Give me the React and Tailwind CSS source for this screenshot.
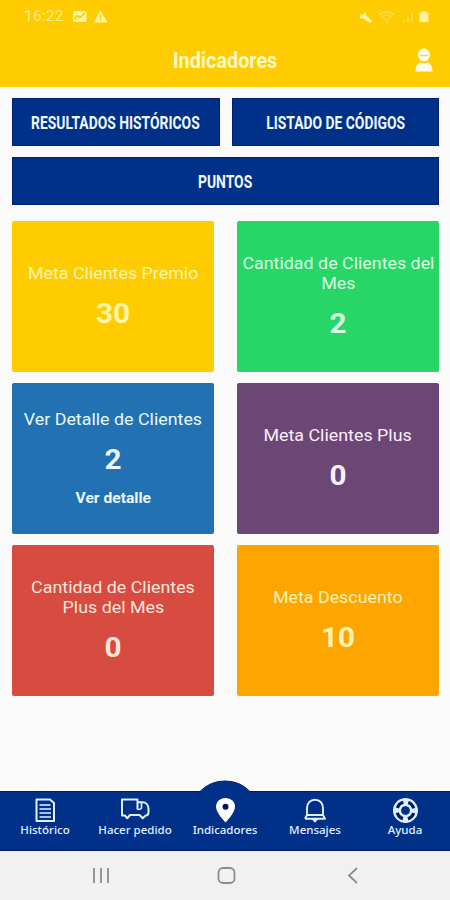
const cards = [
  { title: ["Meta Clientes Premio"], value: 30, box: "bg-[#ffcc02]", text: "text-[#fff6ac]" },
  { title: ["Cantidad de Clientes del", "Mes"], value: 2, box: "bg-[#28d567]", text: "text-[#d9ffe3]" },
  { title: ["Ver Detalle de Clientes"], value: 2, box: "bg-[#2271b3]", text: "text-[#e9f8ff]", link: "Ver detalle" },
  { title: ["Meta Clientes Plus"], value: 0, box: "bg-[#6c4675]", text: "text-[#fbf0fc]" },
  { title: ["Cantidad de Clientes", "Plus del Mes"], value: 0, box: "bg-[#d74b40]", text: "text-[#ffe5db]" },
  { title: ["Meta Descuento"], value: 10, box: "bg-[#ffa500]", text: "text-[#fff2b5]" },
];

const tabs = [
  { label: "Histórico", Icon: DocIcon },
  { label: "Hacer pedido", Icon: TruckIcon },
  { label: "Indicadores", Icon: PinIcon },
  { label: "Mensajes", Icon: BellIcon },
  { label: "Ayuda", Icon: HelpIcon },
];

function DocIcon() {
  return (
    <svg width="22" height="26" viewBox="0 0 22 26" fill="none" stroke="currentColor" strokeWidth="2">
      <path d="M2.500 2.500h13.500l4 3.500V24H2.500z" strokeLinejoin="round" />
      <path d="M5.500 8h11M5.500 12h11.500M5.500 16h11.500M5.500 20h11.500" strokeWidth="1.600" />
    </svg>
  );
}

function TruckIcon() {
  return (
    <svg width="32" height="26" viewBox="0 0 32 26" fill="none" stroke="currentColor" strokeWidth="2" strokeLinejoin="round">
      <path d="M18.500 12.500V2.500H3V18.500h3l2.300 2.800 2.700-3.300h9.500l3.200 3.300 3-2.800c1.800 0 2.800-1.500 2.800-3.500v-3c0-4-2.500-6.800-6-6.800h-5" />
      <path d="M22.500 6v4.500c0 1.500-1.500 2-4 2" strokeWidth="1.600" />
    </svg>
  );
}

function PinIcon() {
  return (
    <svg width="22" height="26" viewBox="0 0 22 26">
      <path fill="#fff" d="M11.500 1C6 1 2 4.800 2 9.800 2 16 11.500 25.500 11.500 25.500S21 16 21 9.800C21 4.800 17 1 11.500 1z" />
      <circle cx="11.500" cy="9.800" r="3" fill="#00174f" />
    </svg>
  );
}

function BellIcon() {
  return (
    <svg width="24" height="26" viewBox="0 0 24 26" fill="none" stroke="currentColor" strokeWidth="1.900" strokeLinejoin="round">
      <path d="M4 18.500V11c0-5 3.300-8.300 8-8.300S20 6 20 11v7.500M4 18h16M2 21.800h20l-2-3.800M2 21.800l2-3.800" />
      <path fill="currentColor" stroke="none" d="M8.500 22h7L12 25.800z" />
    </svg>
  );
}

function HelpIcon() {
  return (
    <svg width="26" height="26" viewBox="0 0 26 26" fill="none" stroke="currentColor">
      <circle cx="13.500" cy="13.500" r="8.300" strokeWidth="8.500" />
      <circle cx="13.500" cy="13.500" r="8.500" stroke="#001c65" strokeWidth="3.200" strokeDasharray="8.350 5" strokeDashoffset="-2.500" />
      <circle cx="13.500" cy="13.500" r="4.300" fill="#003087" stroke="none" />
    </svg>
  );
}

function StatusBar() {
  return (
    <div className="flex h-[33px] items-center justify-between pl-6 pr-[21px] text-[#ffeb83]">
      <div className="flex items-center">
        <span className="w-10 text-[15.5px] leading-none tracking-[0.2px]">16:22</span>
        <svg className="ml-2" width="16" height="13" viewBox="0 0 16 13">
          <rect x="1" y="1" width="13.500" height="11" rx="1.500" fill="#fff2a0" />
          <path d="M2.500 9l3-3.500 2.500 2 4-3.500v-1.500" fill="none" stroke="#f5c900" strokeWidth="1.500" />
        </svg>
        <svg className="ml-[5px]" width="15" height="13" viewBox="0 0 15 13">
          <path d="M7.500.500L14.500 12.500H.500z" fill="#fff2a0" />
          <path d="M7.500 4.500v4M7.500 9.500v1.500" stroke="#f5c900" strokeWidth="1.400" />
        </svg>
      </div>
      <div className="flex items-center">
        <svg width="14" height="14" viewBox="0 0 14 14">
          <path d="M1 4.500h3L7 1.500v3.500L13 11l-2 2-2.500-1.500L4.500 8.500H1z" fill="#fff2a0" />
        </svg>
        <svg className="ml-[5px]" width="17" height="14" viewBox="0 0 17 14" fill="none" stroke="#ffe052" strokeWidth="1.500">
          <path d="M1 5c4-4 11-4 15 0M3.500 7.500c3-3 7-3 10 0M6 10c1.500-1.500 3.500-1.500 5 0" />
          <path d="M7 11.500h3L8.500 13z" fill="#ffe470" stroke="none" />
        </svg>
        <svg className="ml-[7px]" width="12" height="13" viewBox="0 0 12 13" fill="#ffda40">
          <path d="M1 12V9.500h2V12zM5 12V6.500h2V12zM9 12V2h2v10z" />
        </svg>
        <svg className="ml-[5px]" width="10" height="13" viewBox="0 0 10 13" fill="#fff2a0">
          <path d="M3 1h4v1.500h2.500V12H.500V2.500H3z" />
        </svg>
      </div>
    </div>
  );
}

function Header() {
  return (
    <header className="h-[87px] bg-[#ffcc02]">
      <StatusBar />
      <div className="grid h-[54px] grid-cols-[1fr_auto_1fr] items-center">
        <span />
        <h1 className="-mx-4 scale-x-[0.9] text-[22px] font-bold leading-none text-[#fff9c5] pt-0.5">Indicadores</h1>
        <svg className="mr-[17px] justify-self-end" width="18" height="24" viewBox="0 0 18 24" fill="#fffce8">
          <ellipse cx="9" cy="7" rx="6" ry="6.500" />
          <path d="M.500 23.500c0-5 2-8.500 5-9 2 1.500 5 1.500 7 0 3 .5 5 4 5 9z" />
          <path d="M4.500 7c3 1 6 1 9 0" fill="none" stroke="#f3d54b" strokeWidth="1.300" />
        </svg>
      </div>
    </header>
  );
}

function MenuButton({ children, className = "" }) {
  return (
    <button className={`flex h-12 items-center justify-center whitespace-nowrap border border-[#001f70] bg-[#003087] text-[18.5px] font-bold text-[#edf7ff] ${className}`}>
      <span className="scale-x-[0.75] pt-1">{children}</span>
    </button>
  );
}

function Card({ title, value, box, text, link }) {
  return (
    <div className={`flex h-[151px] flex-col items-center justify-center rounded-[2px] ${box} ${text}`}>
      <h2 className="flex flex-col items-center whitespace-nowrap text-[17px] leading-5">
        {title.map((line) => (
          <span key={line} className="scale-x-[1.05]">{line}</span>
        ))}
      </h2>
      <p className="mt-[15px] scale-x-[1.06] text-[28px] font-bold leading-8">{value}</p>
      {link && <a className="mt-3 scale-x-[1.04] text-[15px] font-bold leading-5">{link}</a>}
    </div>
  );
}

function TabBar() {
  return (
    <nav className="relative h-[60px] bg-[#003087] text-[#e0efff]">
      <div className="grid h-full grid-cols-5 border-y border-[#001c65]">
        {tabs.map(({ label, Icon }) => (
          <div key={label} className="relative z-10 flex flex-col items-center pt-[5px]">
            <Icon />
            <span className="whitespace-nowrap font-['Noto_Sans',sans-serif] text-[11.5px] font-medium leading-[13px]">{label}</span>
          </div>
        ))}
      </div>
      <svg className="absolute -top-[11px] left-[196px]" width="58" height="13" viewBox="0 0 58 13">
        <path d="M3 13Q13 1 29 1T55 13z" fill="#003087" />
        <path d="M4 11.500Q14 1 29 1T54 11.500" fill="none" stroke="#001c65" />
      </svg>
    </nav>
  );
}

function SystemBar() {
  return (
    <div className="h-[49px] bg-[#f1f1f1]">
      <svg width="450" height="49" viewBox="0 0 450 49" fill="none" stroke="#8c8c8c" strokeWidth="1.800">
        <path d="M94 17v15M101 17v15M108 17v15M357 17l-8 7.500 8 7.500" />
        <rect x="218.500" y="17" width="16" height="15" rx="4.500" />
      </svg>
    </div>
  );
}

export default function App() {
  return (
    <div className="flex h-[900px] w-[450px] flex-col overflow-hidden bg-[#fafafa] font-['Roboto',sans-serif]">
      <Header />
      <main className="flex-1 px-3 pt-[11px]">
        <div className="grid w-[427px] grid-cols-2 gap-x-3 gap-y-[11px]">
          <MenuButton>RESULTADOS HISTÓRICOS</MenuButton>
          <MenuButton>LISTADO DE CÓDIGOS</MenuButton>
          <MenuButton className="col-span-2">PUNTOS</MenuButton>
        </div>
        <div className="mt-[15.5px] grid w-[427px] grid-cols-2 gap-x-[23px] gap-y-[11.3px]">
          {cards.map((card) => (
            <Card key={card.title.join(" ")} {...card} />
          ))}
        </div>
      </main>
      <TabBar />
      <SystemBar />
    </div>
  );
}
